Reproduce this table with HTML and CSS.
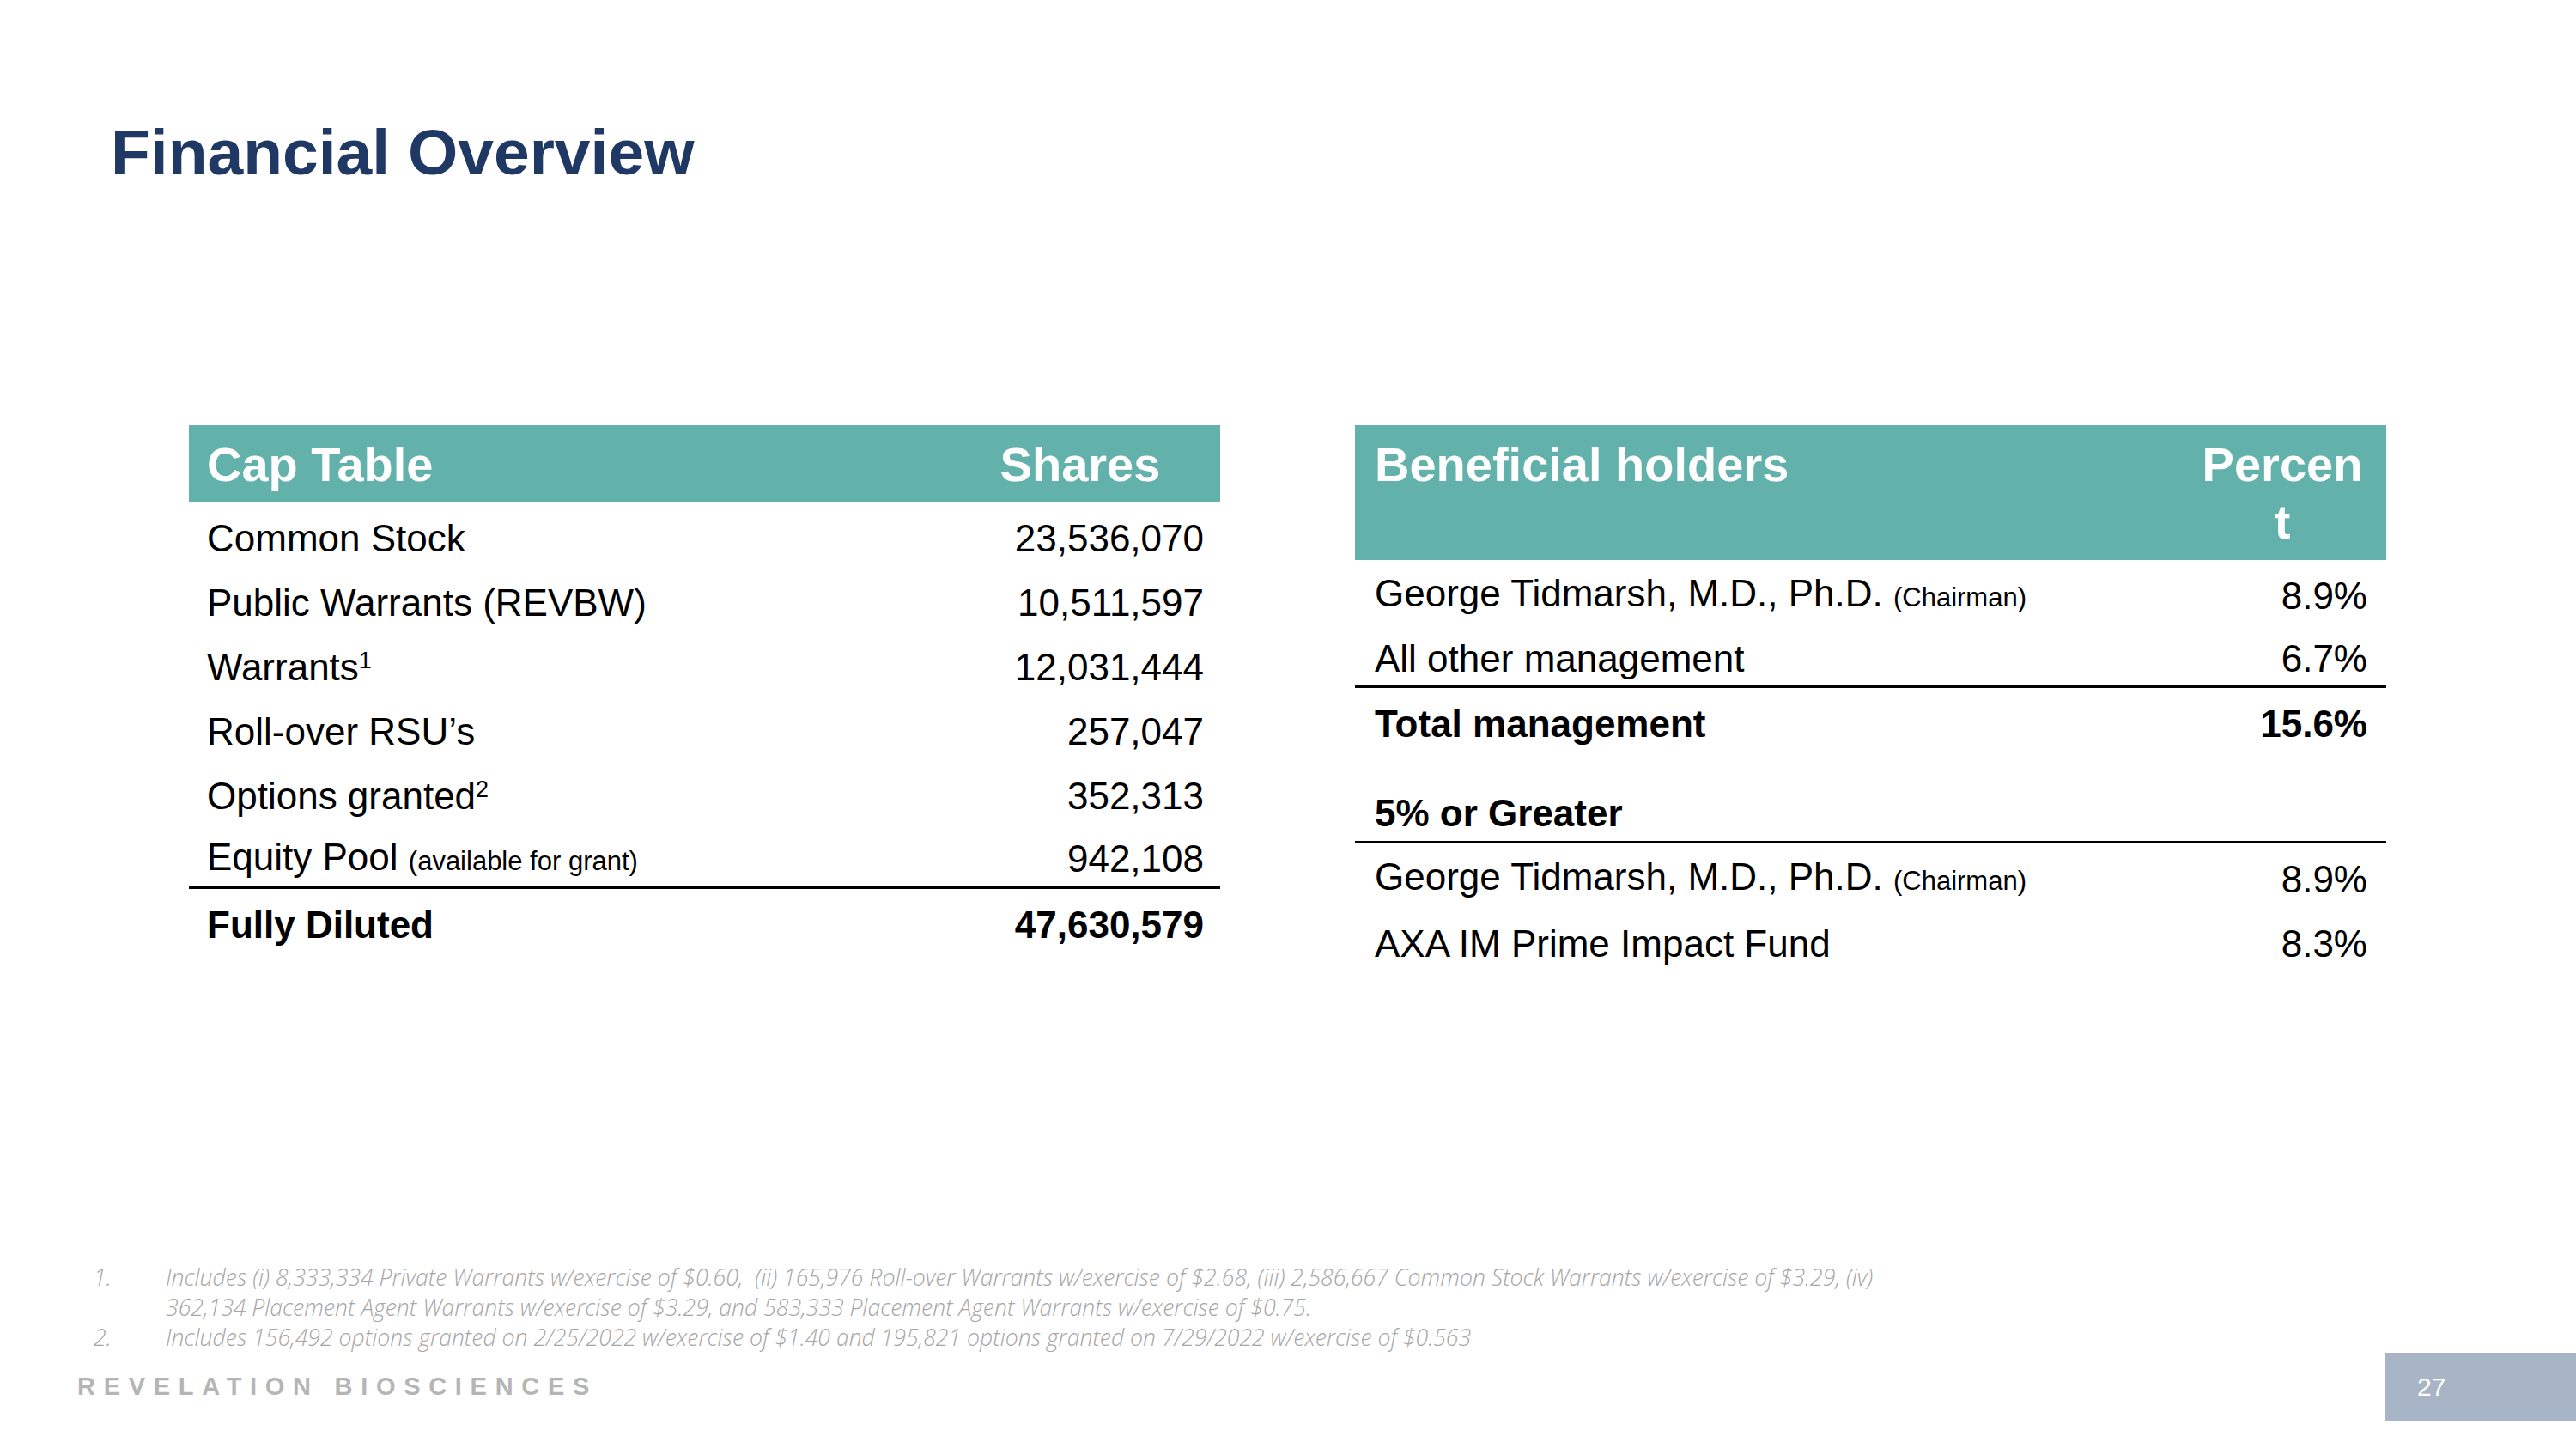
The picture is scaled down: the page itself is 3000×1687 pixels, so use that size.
FILE: index.html
```html
<!DOCTYPE html>
<html lang="en">
<head>
<meta charset="utf-8">
<title>Financial Overview</title>
<link rel="stylesheet" href="styles.css">
</head>
<body>
<div class="slide">
  <h1 class="title">Financial Overview</h1>

  <div class="tables">
    <div class="tbl tbl-cap">
      <div class="head">
        <div class="c1">Cap Table</div>
        <div class="c2">Shares</div>
      </div>
      <div class="row"><div class="c1">Common Stock</div><div class="c2">23,536,070</div></div>
      <div class="row"><div class="c1">Public Warrants (REVBW)</div><div class="c2">10,511,597</div></div>
      <div class="row"><div class="c1">Warrants<sup>1</sup></div><div class="c2">12,031,444</div></div>
      <div class="row"><div class="c1">Roll-over RSU’s</div><div class="c2">257,047</div></div>
      <div class="row"><div class="c1">Options granted<sup>2</sup></div><div class="c2">352,313</div></div>
      <div class="row rule"><div class="c1">Equity Pool <small>(available for grant)</small></div><div class="c2">942,108</div></div>
      <div class="row bold"><div class="c1">Fully Diluted</div><div class="c2">47,630,579</div></div>
    </div>

    <div class="tbl tbl-hold">
      <div class="head">
        <div class="c1">Beneficial holders</div>
        <div class="c2">Percent</div>
      </div>
      <div class="row"><div class="c1">George Tidmarsh, M.D., Ph.D. <small>(Chairman)</small></div><div class="c2">8.9%</div></div>
      <div class="row rule"><div class="c1">All other management</div><div class="c2">6.7%</div></div>
      <div class="row bold"><div class="c1">Total management</div><div class="c2">15.6%</div></div>
      <div class="row bold rule section"><div class="c1">5% or Greater</div><div class="c2"></div></div>
      <div class="row"><div class="c1">George Tidmarsh, M.D., Ph.D. <small>(Chairman)</small></div><div class="c2">8.9%</div></div>
      <div class="row"><div class="c1">AXA IM Prime Impact Fund</div><div class="c2">8.3%</div></div>
    </div>
  </div>

  <ol class="notes">
    <li><span class="num">1.</span><span class="txt">Includes (i) 8,333,334 Private Warrants w/exercise of $0.60,&nbsp; (ii) 165,976 Roll-over Warrants w/exercise of $2.68, (iii) 2,586,667 Common Stock Warrants w/exercise of $3.29, (iv)<br>362,134 Placement Agent Warrants w/exercise of $3.29, and 583,333 Placement Agent Warrants w/exercise of $0.75.</span></li>
    <li><span class="num">2.</span><span class="txt">Includes 156,492 options granted on 2/25/2022 w/exercise of $1.40 and 195,821 options granted on 7/29/2022 w/exercise of $0.563</span></li>
  </ol>

  <div class="footer">
    <div class="brand">REVELATION BIOSCIENCES</div>
    <div class="pagenum">27</div>
  </div>
</div>
</body>
</html>
```

FILE: styles.css
```css
* { box-sizing: border-box; }

html, body {
  margin: 0;
  padding: 0;
  background: #ffffff;
}

.slide {
  width: 3000px;
  height: 1687px;
  overflow: hidden;
  padding-top: 140px;
  font-family: "Liberation Sans", Arial, sans-serif;
  color: #000;
}

.title {
  margin: 0 0 0 129px;
  font-size: 75px;
  line-height: 75px;
  font-weight: 700;
  color: #203864;
}

.tables {
  margin-top: 280px;
  padding-left: 220px;
  display: flex;
  gap: 157px;
  align-items: flex-start;
}

.tbl {
  display: flex;
  flex-direction: column;
  width: 1201px;
}

.head {
  display: flex;
  background: #62b2ab;
  color: #fff;
  font-weight: 700;
  font-size: 56px;
  line-height: 67px;
  padding: 11.5px 0;
}

.head .c2 {
  text-align: center;
  word-break: break-all;
}

.row {
  display: flex;
  align-items: center;
  height: 75px;
  padding-top: 8px;
  font-size: 44px;
  line-height: 50px;
}

.row.rule {
  border-bottom: 3px solid #000;
}

.row.bold {
  font-weight: 700;
}

.c1 {
  flex: 1;
  padding-left: 21px;
  white-space: nowrap;
}

.c2 {
  flex: none;
  text-align: right;
}

.tbl-cap .c2 {
  width: 328px;
  padding: 0 19px 0 21px;
}

.tbl-hold .c1 { padding-left: 23px; }
.tbl-hold .c2 {
  width: 242px;
  padding: 0 22px;
}

.tbl-hold .row.rule:not(.section) { height: 74px; }

.tbl-hold .section {
  margin-top: 31px;
}

small {
  font-size: 31px;
}

sup {
  font-size: 27px;
  line-height: 0;
  vertical-align: 14px;
}

.notes {
  list-style: none;
  margin: 338px 0 0 0;
  padding: 0 0 0 109px;
  font-family: "Open Sans", sans-serif;
  font-style: italic;
  font-weight: 300;
  font-size: 26.6px;
  line-height: 35px;
  color: #a6a6a6;
}

.notes li {
  display: flex;
}

.notes .num {
  width: 84px;
  flex: none;
}

.notes .txt {
  white-space: nowrap;
}

.footer {
  display: flex;
  justify-content: space-between;
  align-items: stretch;
  height: 79px;
  padding-left: 90px;
}

.brand {
  font-size: 29px;
  line-height: 79px;
  font-weight: 700;
  letter-spacing: 9.7px;
  color: #b5b5b5;
}

.pagenum {
  width: 222px;
  background: #a8b5c6;
  color: #fff;
  font-size: 30px;
  line-height: 79px;
  padding-left: 37px;
}
```
